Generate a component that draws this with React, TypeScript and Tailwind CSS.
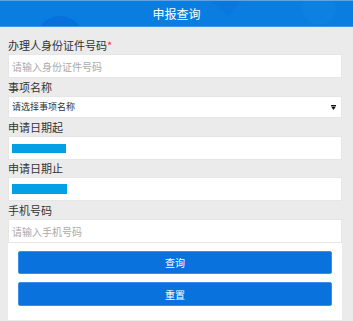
import { useState } from 'react';

const font = { fontFamily: '"Noto Sans CJK SC", "Noto Sans", sans-serif' };

export default function App() {
  const [idNo, setIdNo] = useState<string>('');
  const [item, setItem] = useState<string>('');
  const [phone, setPhone] = useState<string>('');

  const reset = () => {
    setIdNo('');
    setItem('');
    setPhone('');
  };

  return (
    <div className="min-h-[321px] w-[353px] bg-[#ebebeb] flex flex-col" style={font}>
      {/* header */}
      <div className="relative h-[27px] overflow-hidden bg-[#0a7ee0] border-t border-[#5fa3e6] border-b border-b-[#3f96e6] flex items-center justify-center">
        <div className="absolute left-[36px] top-[15px] w-[48px] h-[48px] rounded-full bg-[#0671dc]" />
        <div className="absolute left-[302px] top-[-10px] w-[34px] h-[34px] rounded-full bg-[#0c81e2]" />
        <div className="absolute left-[215px] top-[-30px] w-[30px] h-[40px] rotate-[40deg] bg-[#0877de]" />
        <span className="relative text-white text-[12px] leading-none">申报查询</span>
      </div>

      <div className="flex flex-col pl-2 pr-[11px] pt-[10px]">
        <label className="h-[17px] leading-[17px] text-[11px] text-[#333]">
          办理人身份证件号码<span className="text-[#e33]">*</span>
        </label>
        <input
          value={idNo}
          onChange={(e) => setIdNo(e.target.value)}
          placeholder="请输入身份证件号码"
          className="h-[24px] bg-white border border-[#e6e6e6] px-[3px] text-[10px] text-[#333] placeholder:text-[#aaa] outline-none"
        />

        <label className="h-[18px] leading-[18px] text-[11px] text-[#333]">事项名称</label>
        <div className="relative h-[22px] bg-white border border-[#e6e6e6] flex items-center">
          <select
            value={item}
            onChange={(e) => setItem(e.target.value)}
            className="appearance-none w-full h-full bg-transparent px-[3px] text-[9px] text-[#333] outline-none"
          >
            <option value="">请选择事项名称</option>
          </select>
          <svg className="absolute right-[5px] top-[8px] pointer-events-none" width="5" height="5" viewBox="0 0 5 5">
            <rect x="0" y="0" width="5" height="1" fill="#111" />
            <polygon points="0,1.5 5,1.5 2.5,5" fill="#111" />
          </svg>
        </div>

        <label className="h-[18px] leading-[18px] text-[11px] text-[#333]">申请日期起</label>
        <div className="h-[24px] bg-white border border-[#e6e6e6] flex items-center pl-[3px]">
          <div className="w-[54px] h-[9px] bg-[#03a0e6]" />
        </div>

        <label className="h-[17px] leading-[17px] text-[11px] text-[#333]">申请日期止</label>
        <div className="h-[24px] bg-white border border-[#e6e6e6] flex items-center pl-[3px]">
          <div className="w-[55px] h-[10px] bg-[#03a0e6]" />
        </div>

        <label className="h-[18px] leading-[18px] text-[11px] text-[#333]">手机号码</label>
        <input
          value={phone}
          onChange={(e) => setPhone(e.target.value)}
          placeholder="请输入手机号码"
          className="h-[24px] bg-white border border-[#e6e6e6] px-[3px] text-[10px] text-[#333] placeholder:text-[#aaa] outline-none"
        />

        <div className="bg-white flex flex-col gap-[8px] px-[10px] pt-[8px] pb-[14px]">
          <button className="h-[23px] rounded-[2px] bg-[#0a72dd] border border-[#3a8ee8] text-white text-[10px]">查询</button>
          <button onClick={reset} className="h-[24px] rounded-[2px] bg-[#0a72dd] border border-[#3a8ee8] text-white text-[10px]">重置</button>
        </div>
      </div>
    </div>
  );
}
